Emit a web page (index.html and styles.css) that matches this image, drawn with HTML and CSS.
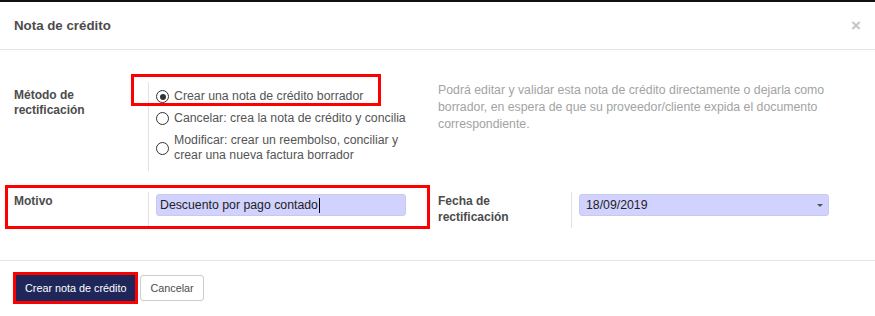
FILE: index.html
```html
<!DOCTYPE html>
<html lang="es">
<head>
    <meta charset="UTF-8">
    <meta name="viewport" content="width=device-width, initial-scale=1.0">
    <title>Nota de crédito</title>
    <link rel="stylesheet" href="styles.css">
</head>
<body>
    <div class="modal">
        <header class="modal-header">
            <h4 class="modal-title">Nota de crédito</h4>
            <button type="button" class="close">×</button>
        </header>

        <div class="modal-body">
            <div class="form-row row-method">
                <div class="group group-left">
                    <div class="cell-label label-top">Método de rectificación</div>
                    <div class="cell-field field-radios">
                        <ul class="radio-list">
                            <li><span class="radio checked"></span><span>Crear una nota de crédito borrador</span></li>
                            <li><span class="radio"></span><span>Cancelar: crea la nota de crédito y concilia</span></li>
                            <li><span class="radio"></span><span>Modificar: crear un reembolso, conciliar y crear una nueva factura borrador</span></li>
                        </ul>
                    </div>
                </div>
                <div class="group group-right help">
                    Podrá editar y validar esta nota de crédito directamente o dejarla como borrador, en espera de que su proveedor/cliente expida el documento correspondiente.
                </div>
            </div>

            <div class="form-row row-reason">
                <div class="group group-left">
                    <div class="cell-label">Motivo</div>
                    <div class="cell-field">
                        <div class="field-input">Descuento por pago contado<span class="text-caret"></span></div>
                    </div>
                </div>
                <div class="group group-right">
                    <div class="cell-label label-right">Fecha de rectificación</div>
                    <div class="cell-field">
                        <div class="field-input field-date">
                            <span>18/09/2019</span>
                            <span class="dropdown-caret"></span>
                        </div>
                    </div>
                </div>
            </div>

            <!-- marcas rojas sobre el formulario -->
            <span class="highlight hl-method"></span>
            <span class="highlight hl-reason"></span>
        </div>

        <footer class="modal-footer">
            <button type="button" class="btn btn-primary">Crear nota de crédito</button>
            <button type="button" class="btn btn-secondary">Cancelar</button>
        </footer>
    </div>
</body>
</html>
```

FILE: styles.css
```css
body {
    margin: 0;
    font-family: 'Liberation Sans', Arial, sans-serif;
    font-size: 12px;
    color: #4c4c4c;
    background-color: #fff;
}

.modal {
    border-top: 2px solid #111;
    width: 875px;
}

/* Cabecera */
.modal-header {
    display: flex;
    align-items: center;
    justify-content: space-between;
    height: 48px;
    padding: 0 14px 1px 14px;
    border-bottom: 1px solid #e5e5e5;
    box-sizing: border-box;
}

.modal-title {
    margin: 0;
    font-size: 13.3px;
    font-weight: bold;
    color: #4c4c4c;
}

.close {
    border: none;
    background: none;
    padding: 0;
    font-family: 'Liberation Sans', Arial, sans-serif;
    font-size: 17px;
    font-weight: bold;
    line-height: 1;
    color: #c4c4c4;
    cursor: pointer;
}

/* Cuerpo */
.modal-body {
    position: relative;
    padding: 32px 14px 32px 14px;
}

.form-row {
    display: flex;
}

.row-reason {
    margin-top: 21px;
}

.group {
    display: flex;
    align-items: stretch;
}

.group-left {
    width: 424px;
}

.group-right {
    flex: 1;
}

.cell-label {
    width: 134px;
    flex-shrink: 0;
    padding-top: 1px;
    font-weight: bold;
    line-height: 16px;
    color: #4c4c4c;
    box-sizing: border-box;
}

.label-top {
    padding-top: 6px;
    line-height: 15px;
}

.label-right {
    width: 133px;
    padding-right: 40px;
    padding-bottom: 3px;
}

.cell-field {
    flex: 1;
    border-left: 1px solid #e2e2e2;
    padding: 2px 8px 6px 7px;
}

.field-radios {
    padding-right: 20px;
}

.help {
    display: block;
    font-size: 12.3px;
    line-height: 17px;
    color: #a3a3a3;
}

/* Opciones */
.radio-list {
    list-style: none;
    margin: 0;
    padding: 5px 0 2px 0;
}

.radio-list li {
    display: flex;
    align-items: center;
    gap: 5px;
    margin-bottom: 7px;
    font-size: 12.3px;
    line-height: 15px;
    color: #555;
}

.radio-list li:last-child {
    margin-bottom: 0;
}

.radio {
    width: 11px;
    height: 11px;
    border: 1px solid #333;
    border-radius: 50%;
    flex-shrink: 0;
    position: relative;
    background-color: #fff;
}

.radio.checked::after {
    content: '';
    position: absolute;
    top: 2.5px;
    left: 2.5px;
    width: 6px;
    height: 6px;
    border-radius: 50%;
    background-color: #333;
}

/* Campos */
.field-input {
    display: flex;
    align-items: center;
    width: 250px;
    height: 22px;
    padding: 0 3px;
    box-sizing: border-box;
    background-color: #d2d2ff;
    border: 1px solid #c9c9ec;
    border-radius: 3px;
    font-size: 12.3px;
    color: #222;
}

.text-caret {
    display: inline-block;
    width: 1px;
    height: 15px;
    margin-left: 1px;
    background-color: #000;
}

.field-date {
    justify-content: space-between;
    padding-left: 6px;
    padding-right: 5px;
}

.dropdown-caret {
    width: 0;
    height: 0;
    border-left: 3px solid transparent;
    border-right: 3px solid transparent;
    border-top: 3px solid #555;
}

/* Marcas rojas */
.highlight {
    position: absolute;
    border: 3px solid #f00;
    box-sizing: border-box;
    pointer-events: none;
}

.hl-method {
    left: 131px;
    top: 24px;
    width: 250px;
    height: 32px;
}

.hl-reason {
    left: 5px;
    top: 135px;
    width: 425px;
    height: 44px;
}

/* Pie */
.modal-footer {
    display: flex;
    align-items: center;
    border-top: 1px solid #e5e5e5;
    padding: 14px 16px 14px 16px;
}

.btn {
    height: 26px;
    box-sizing: border-box;
    font-family: 'Liberation Sans', Arial, sans-serif;
    font-size: 10.8px;
    border-radius: 3px;
    cursor: pointer;
}

.btn-primary {
    background-color: #1f275a;
    color: #fff;
    border: 1px solid #1f275a;
    padding: 0 8px;
    border-radius: 0;
    outline: 3px solid #f00;
    margin-right: 5px;
}

.btn-secondary {
    background-color: #fff;
    color: #4c4c4c;
    border: 1px solid #ccc;
    padding: 0 9px;
}
```
